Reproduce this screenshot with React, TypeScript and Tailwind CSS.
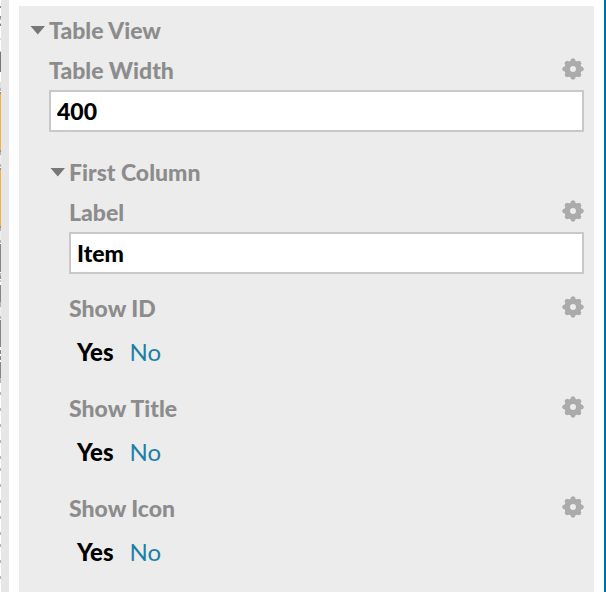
import React, { useState } from 'react';

// [y, height, colour] marks of the canvas that stays visible beside the pane
const canvasMarks: [number, number, string][] = [
  [6, 2, '#8a8a8a'],
  [16, 2, '#8a8a8a'],
  [18, 2, '#b4b4b4'],
  [23, 1, '#c8c8c8'],
  [24, 2, '#808080'],
  [38, 2, '#dcdcdc'],
  [51, 1, '#d0d0d0'],
  [52, 20, '#777777'],
  [82, 6, '#dcdcdc'],
  [88, 3, '#b4b4b4'],
  [92, 2, '#8f8f8f'],
  [94, 56, '#fbb034'],
  [150, 2, '#8f8f8f'],
  [152, 3, '#b4b4b4'],
  [155, 9, '#eeeeee'],
  [164, 3, '#b4b4b4'],
  [168, 2, '#8f8f8f'],
  [170, 56, '#fbb034'],
  [226, 2, '#8f8f8f'],
  [228, 3, '#b4b4b4'],
  [231, 9, '#eeeeee'],
  [240, 3, '#b4b4b4'],
  [244, 28, '#858585'],
  [273, 3, '#b4b4b4'],
  [276, 3, '#8f8f8f'],
  [280, 2, '#c8c8c8'],
  [285, 17, '#858585'],
  [302, 5, '#b4b4b4'],
  [307, 9, '#eeeeee'],
  [316, 3, '#b4b4b4'],
  [320, 27, '#858585'],
  [350, 4, '#858585'],
  [356, 4, '#858585'],
  [362, 16, '#858585'],
  [378, 5, '#b4b4b4'],
  [392, 3, '#b4b4b4'],
  [408, 3, '#b4b4b4'],
  [424, 3, '#b4b4b4'],
  [440, 3, '#b4b4b4'],
  [456, 3, '#b4b4b4'],
  [468, 3, '#b4b4b4'],
  [484, 3, '#b4b4b4'],
  [500, 3, '#b4b4b4'],
  [516, 3, '#b4b4b4'],
  [532, 3, '#b4b4b4'],
  [544, 3, '#b4b4b4'],
  [560, 3, '#b4b4b4'],
  [576, 3, '#b4b4b4'],
];

const teeth = [0, 45, 90, 135, 180, 225, 270, 315];

const GearIcon = () => (
  <svg viewBox="0 0 22 22" className="size-[22px]" aria-hidden="true">
    <g fill="#ababab">
      {teeth.map(angle => (
        <path key={angle} d="M7.6 5 L9.2 1 Q11 -0.6 12.8 1 L14.4 5 Z" transform={`rotate(${angle} 11 11)`} />
      ))}
    </g>
    <circle cx="11" cy="11" r="5.8" fill="none" stroke="#ababab" strokeWidth="5.6" />
  </svg>
);

interface FieldHeaderProps {
  label: string;
  htmlFor?: string;
  id?: string;
}

const FieldHeader: React.FC<FieldHeaderProps> = ({ label, htmlFor, id }) => (
  <div className="flex h-10 items-center justify-between">
    {htmlFor ? <label htmlFor={htmlFor}>{label}</label> : <span id={id}>{label}</span>}
    <button type="button" aria-label={`${label} options`} className="pb-0.5">
      <GearIcon />
    </button>
  </div>
);

interface TextFieldProps {
  id: string;
  label: string;
  initialValue: string;
}

const TextField: React.FC<TextFieldProps> = ({ id, label, initialValue }) => {
  const [value, setValue] = useState(initialValue);

  return (
    <div>
      <FieldHeader label={label} htmlFor={id} />
      <input
        id={id}
        type="text"
        value={value}
        onChange={e => setValue(e.target.value)}
        className="block h-[42px] w-full border-2 border-[#c8c8c8] bg-white px-1.5 font-black text-black outline-none"
      />
    </div>
  );
};

interface YesNoFieldProps {
  id: string;
  label: string;
}

const YesNoField: React.FC<YesNoFieldProps> = ({ id, label }) => {
  const [on, setOn] = useState(true);
  const selected = 'font-black text-black';
  const unselected = 'font-normal text-[#1c7fa6]';

  return (
    <div role="group" aria-labelledby={id}>
      <FieldHeader label={label} id={id} />
      <div className="flex h-12 items-center gap-4 px-2 text-2xl">
        <button type="button" aria-pressed={on} onClick={() => setOn(true)} className={on ? selected : unselected}>
          Yes
        </button>
        <button type="button" aria-pressed={!on} onClick={() => setOn(false)} className={on ? unselected : selected}>
          No
        </button>
      </div>
    </div>
  );
};

interface SectionProps {
  title: string;
  children: React.ReactNode;
}

const Section: React.FC<SectionProps> = ({ title, children }) => {
  const [open, setOpen] = useState(true);

  return (
    <section>
      <button
        type="button"
        aria-expanded={open}
        onClick={() => setOpen(!open)}
        className="flex h-10 items-center gap-1"
      >
        <svg viewBox="0 0 16 10" className={open ? 'h-2.5 w-4' : 'h-2.5 w-4 -rotate-90'} aria-hidden="true">
          <path d="M1.5 1 H16 L8.75 9.4 Z" fill="#777777" />
        </svg>
        {title}
      </button>
      {open && <div className="pl-5">{children}</div>}
    </section>
  );
};

export default function App() {
  return (
    <div className="flex min-h-screen bg-white font-['Lato',sans-serif] text-[23px] leading-7 font-black text-[#8c8c8c]">
      <svg className="h-[592px] w-px shrink-0" viewBox="0 0 1 592" aria-hidden="true">
        {canvasMarks.map(([y, height, fill]) => (
          <rect key={y} y={y} width="1" height={height} fill={fill} />
        ))}
      </svg>
      <div className="w-2 shrink-0 bg-[#e6e6e6]" />
      <main className="flex flex-1 border-r-2 border-[#007298] px-2.5 pt-1.5">
        <div className="flex-1 bg-[#ececec] pt-1 pr-2.5 pl-2.5">
          <Section title="Table View">
            <TextField id="table-width" label="Table Width" initialValue="400" />
            <div className="pt-5">
              <Section title="First Column">
                <TextField id="column-label" label="Label" initialValue="Item" />
                <div className="flex flex-col gap-3 pt-3.5">
                  <YesNoField id="show-id" label="Show ID" />
                  <YesNoField id="show-title" label="Show Title" />
                  <YesNoField id="show-icon" label="Show Icon" />
                </div>
              </Section>
            </div>
          </Section>
        </div>
      </main>
    </div>
  );
}
